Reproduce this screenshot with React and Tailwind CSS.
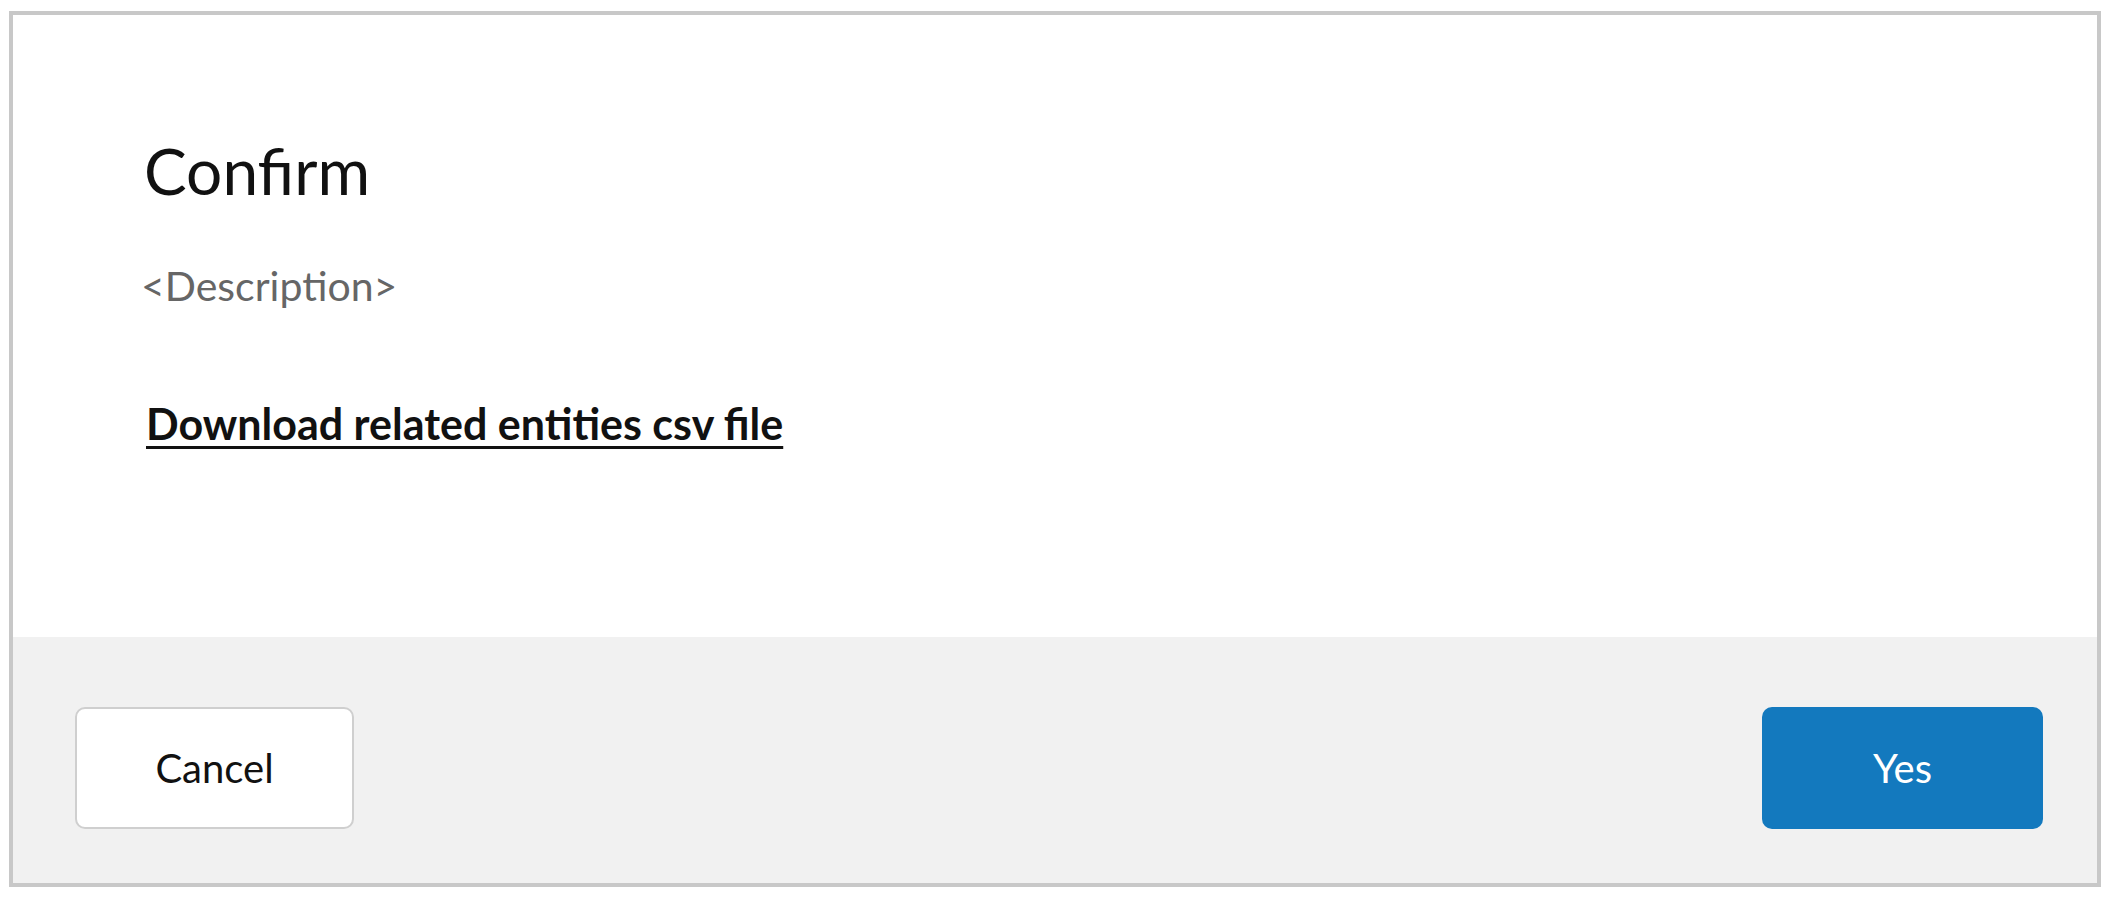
export default function App() {
  return (
    <div className="min-h-screen bg-white pl-[9px] pt-[11px]" style={{ fontFamily: "Lato, 'Open Sans', sans-serif" }}>
      <ConfirmDialog
        title="Confirm"
        description="<Description>"
        linkLabel="Download related entities csv file"
      />
    </div>
  );
}

function ConfirmDialog({ title, description, linkLabel, cancelLabel = "Cancel", confirmLabel = "Yes" }) {
  return (
    <div className="flex h-[876px] w-[2092px] flex-col border-4 border-[#c8c8c8] bg-white">
      <div className="flex-1 pl-[128px] pt-[124px]">
        <h2 className="ml-[3px] text-[64px] font-normal leading-none text-[#111]">{title}</h2>
        <p className="mt-[62px] text-[41px] leading-none text-[#666]">{description}</p>
        <a
          href="#"
          className="ml-[5px] mt-[96px] inline-block text-[43px] font-bold leading-none text-[#111] underline decoration-[3px] underline-offset-[6px]"
        >
          {linkLabel}
        </a>
      </div>

      <div className="flex h-[246px] items-start justify-between bg-[#f1f1f1] pl-[62px] pr-[54px] pt-[70px]">
        <button
          type="button"
          className="flex h-[122px] w-[279px] items-center justify-center rounded-[10px] border-2 border-[#cfcfcf] bg-white text-[40px] text-[#111]"
        >
          {cancelLabel}
        </button>
        <button
          type="button"
          className="flex h-[122px] w-[281px] items-center justify-center rounded-[10px] bg-[#1379be] text-[40px] text-white"
        >
          {confirmLabel}
        </button>
      </div>
    </div>
  );
}
